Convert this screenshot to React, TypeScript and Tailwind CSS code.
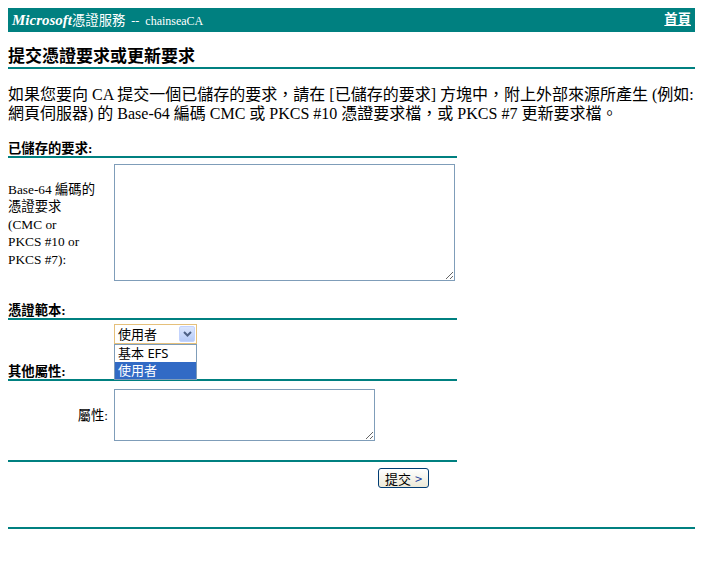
export default function App() {
  const labelLines = ["Base-64 編碼的", "憑證要求", "(CMC or", "PKCS #10 or", "PKCS #7):"];
  return (
    <div className="px-2 pt-2 pb-10 bg-white text-black font-['Liberation_Serif','Noto_Sans_CJK_TC',serif]">
      <div className="h-[24px] bg-[#008080] flex items-center justify-between pl-1 pr-[4px] text-white text-[13.33px] leading-none">
        <div className="flex items-baseline">
          <span className="font-bold italic text-[15px]">Microsoft</span>
          <span>憑證服務</span>
          <span className="whitespace-pre text-[12px]">  --  chainseaCA</span>
        </div>
        <a href="#" className="font-bold underline text-white">首頁</a>
      </div>

      <h1 className="mt-[15px] text-[17px] font-bold leading-[20px] border-b-2 border-[#008080]">
        提交憑證要求或更新要求
      </h1>

      <p className="mt-[16px] text-[16px] leading-[19px] whitespace-nowrap">
        如果您要向 CA 提交一個已儲存的要求，請在 [已儲存的要求] 方塊中，附上外部來源所產生 (例如:
        <br />
        網頁伺服器) 的 Base-64 編碼 CMC 或 PKCS #10 憑證要求檔，或 PKCS #7 更新要求檔。
      </p>

      <div className="w-[449px]">
        <div className="mt-[18px] text-[13.33px] font-bold leading-[15px] border-b-2 border-[#008080]">
          已儲存的要求:
        </div>

        <div className="mt-[6px] flex items-center">
          <div className="w-[106px] text-[13.33px] pt-[4px]">
            {labelLines.map((l) => (
              <div key={l} className="h-[17.5px] leading-[17.5px] whitespace-nowrap">
                {l}
              </div>
            ))}
          </div>
          <textarea className="w-[341px] h-[117px] border border-[#7f9db9] resize bg-white outline-none" />
        </div>

        <div className="mt-[22px] text-[13.33px] font-bold leading-[15px] border-b-2 border-[#008080]">
          憑證範本:
        </div>

        <div className="mt-[4px] pl-[106px]">
          <div className="relative w-[83px] h-[20px] border border-[#e5c07b] bg-white flex items-center font-['Noto_Sans','Noto_Sans_CJK_TC',sans-serif] text-[13px]">
            <span className="pl-[3px] leading-none flex-1">使用者</span>
            <div className="w-[16px] h-[16px] mr-[1px] rounded-[2px] bg-gradient-to-b from-[#dbe6fd] to-[#b6cbf7] border border-[#c3d3fd] flex items-center justify-center">
              <svg width="9" height="6" viewBox="0 0 9 6">
                <path d="M1 1 L4.5 4.5 L8 1" stroke="#4d6185" strokeWidth="2" fill="none" />
              </svg>
            </div>
            <div className="absolute left-[-1px] top-[19px] w-[83px] border border-[#7f9db9] bg-white z-10 text-[13px] leading-[17px]">
              <div className="h-[17px] pl-[3px] flex items-center">基本 EFS</div>
              <div className="h-[17px] pl-[3px] flex items-center bg-[#316ac5] text-white">使用者</div>
            </div>
          </div>
        </div>

        <div className="mt-[20px] text-[13.33px] font-bold leading-[15px] border-b-2 border-[#008080]">
          其他屬性:
        </div>

        <div className="mt-[8px] flex items-center">
          <div className="w-[106px] text-right pr-[6px] text-[13.33px] leading-[17px]">屬性:</div>
          <textarea className="w-[261px] h-[52px] border border-[#7f9db9] resize bg-white outline-none" />
        </div>

        <div className="mt-[19px] border-t-2 border-[#008080]" />

        <div className="mt-[6px] pl-[370px]">
          <button className="w-[51px] h-[20px] rounded-[3px] border border-[#003c74] bg-gradient-to-b from-white to-[#ece9d8] text-[13px] leading-none font-['Noto_Sans_CJK_TC',sans-serif] flex items-center justify-center gap-[4px]">
            <span>提交</span>
            <span className="text-[#1a3f9e]">&gt;</span>
          </button>
        </div>
      </div>

      <div className="mt-[39px] border-t-2 border-[#008080]" />
    </div>
  );
}
